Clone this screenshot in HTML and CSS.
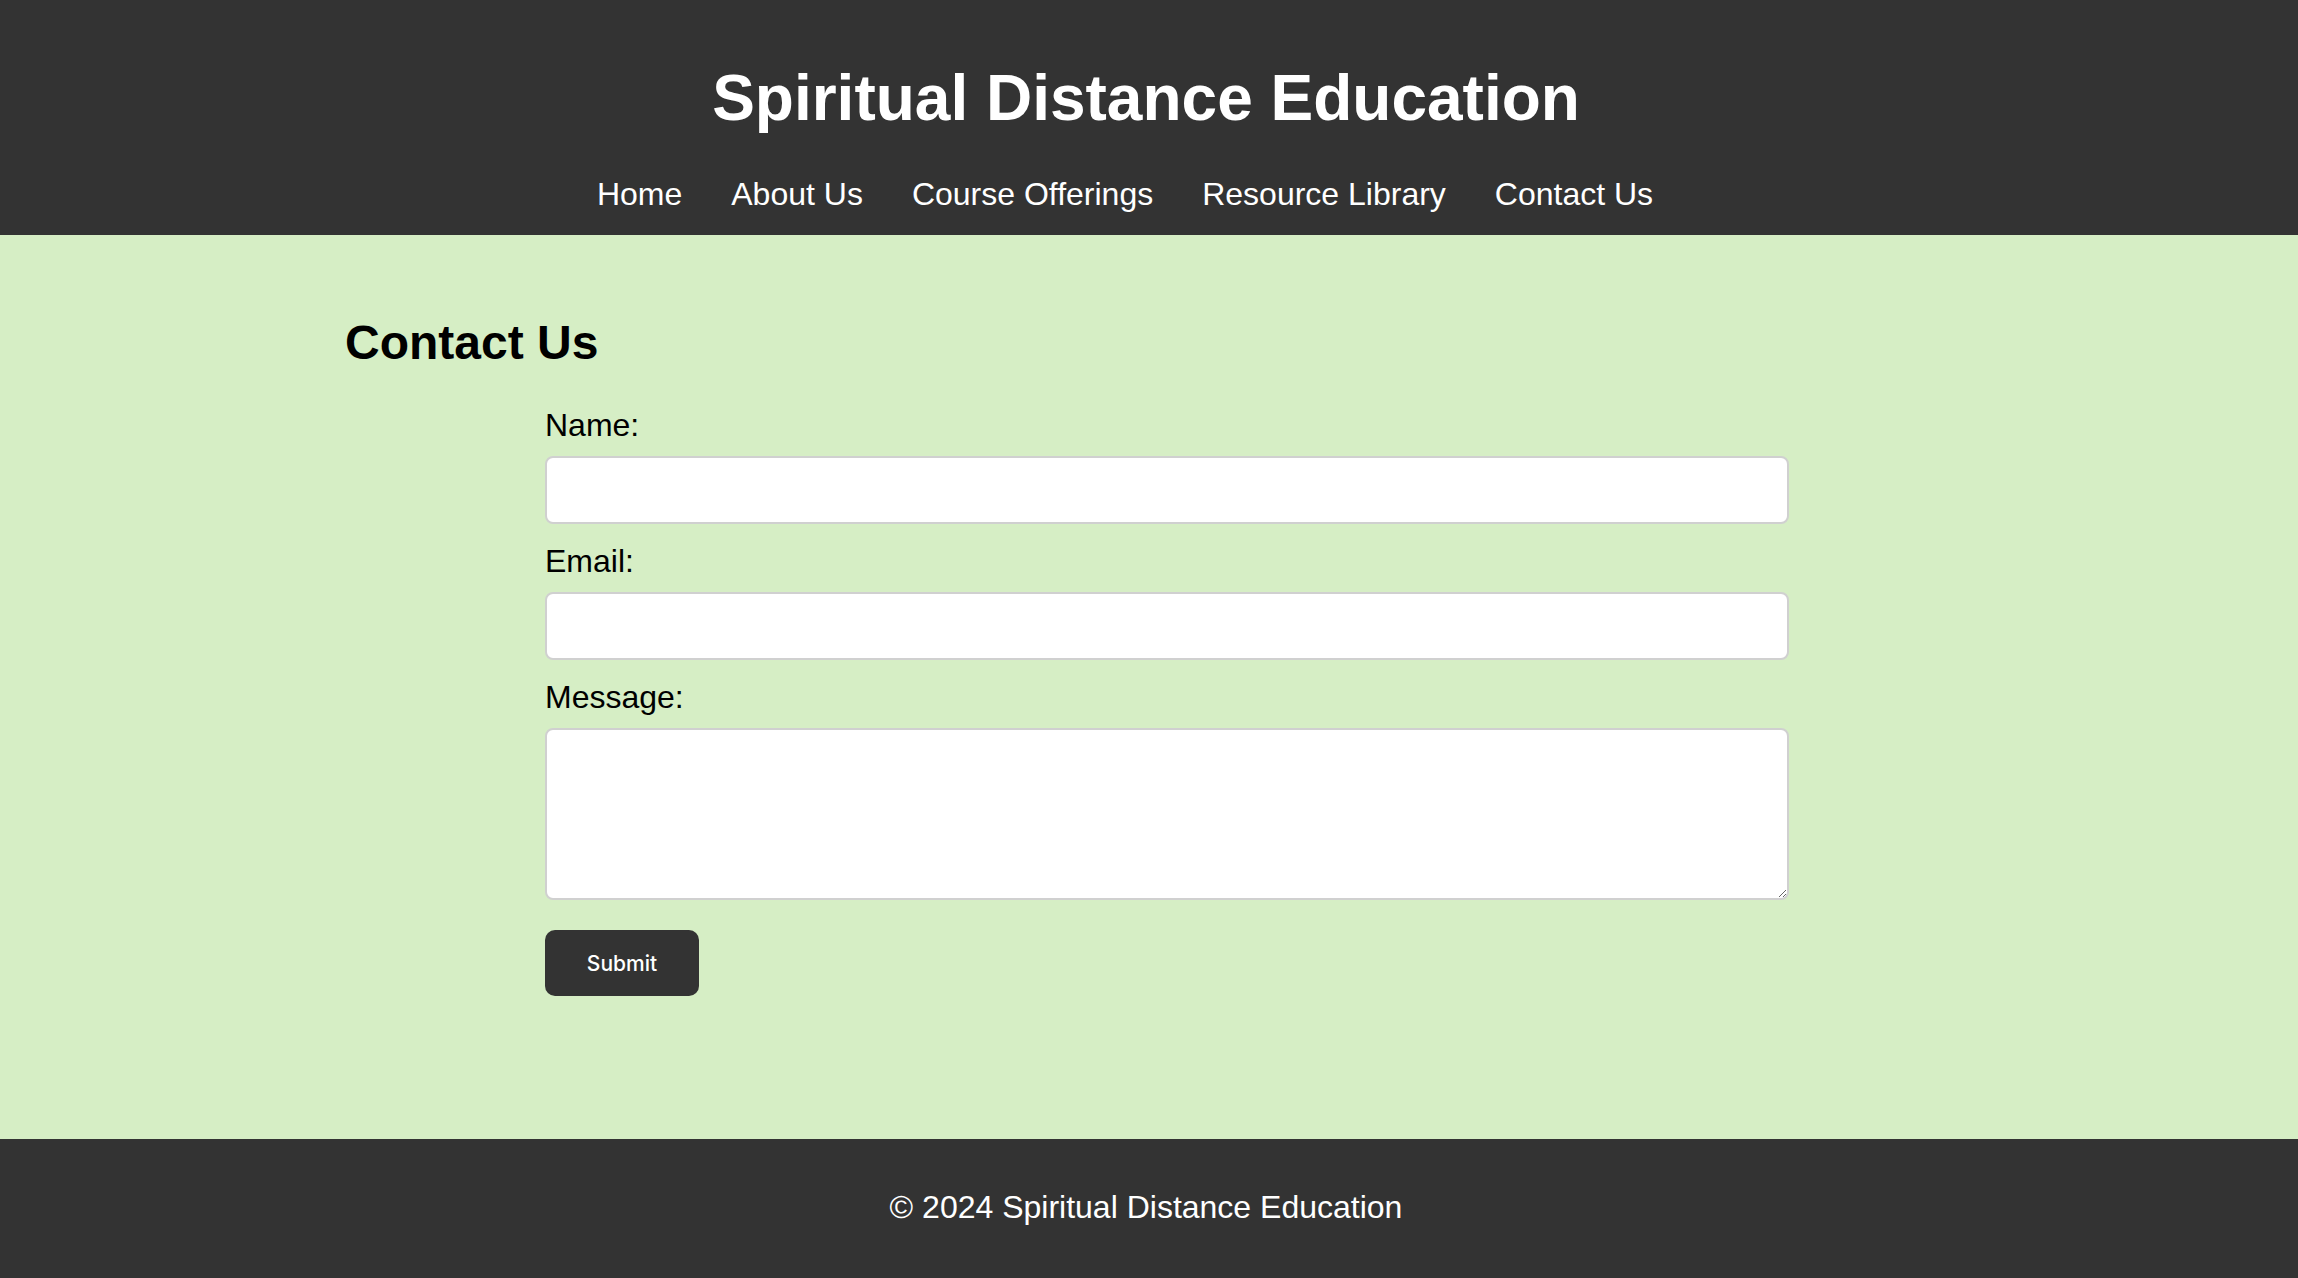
FILE: index.html
```html
<!DOCTYPE html>
<html lang="en">
<head>
<meta charset="utf-8">
<title>Contact Us - Spiritual Distance Education</title>
<link rel="stylesheet" href="styles.css">
</head>
<body>
<header class="site-header">
  <h1 class="site-title">Spiritual Distance Education</h1>
  <nav class="site-nav">
    <a href="#" class="nav-link">Home</a>
    <a href="#" class="nav-link">About Us</a>
    <a href="#" class="nav-link">Course Offerings</a>
    <a href="#" class="nav-link">Resource Library</a>
    <a href="#" class="nav-link">Contact Us</a>
  </nav>
</header>
<main class="main">
  <div class="container">
    <h2 class="page-title">Contact Us</h2>
    <form class="contact-form">
      <label class="field-label" for="name">Name:</label>
      <input class="field-input" type="text" id="name" name="name">
      <label class="field-label" for="email">Email:</label>
      <input class="field-input" type="email" id="email" name="email">
      <label class="field-label" for="message">Message:</label>
      <textarea class="field-input field-textarea" id="message" name="message"></textarea>
      <button class="submit-btn" type="submit">Submit</button>
    </form>
  </div>
</main>
<footer class="site-footer">
  <p class="footer-text">© 2024 Spiritual Distance Education</p>
</footer>
</body>
</html>
```

FILE: styles.css
```css
html, body {
  margin: 0;
  padding: 0;
}

body {
  font-family: "Liberation Sans", Arial, sans-serif;
  background: #d6eec5;
  color: #000;
}

.site-header {
  background: #333333;
  color: #fff;
  padding: 61px 6px 22px 0;
  text-align: center;
}

.site-title {
  margin: 0 0 41px;
  font-size: 64px;
  font-weight: bold;
  line-height: normal;
}

.site-nav {
  display: flex;
  justify-content: center;
  gap: 49px;
  padding-right: 42px;
  font-size: 32px;
  line-height: normal;
}

.nav-link {
  color: #fff;
  text-decoration: none;
}

.main {
  background: #d6eec5;
  padding: 80px 0 143px;
}

.container {
  max-width: 1608px;
  margin: 0 auto;
}

.page-title {
  margin: 0 0 37px;
  font-size: 48px;
  font-weight: bold;
  line-height: normal;
}

.contact-form {
  display: flex;
  flex-direction: column;
  align-items: flex-start;
  margin-left: 200px;
  width: 1244px;
}

.field-label {
  display: block;
  font-size: 32px;
  line-height: normal;
  margin-bottom: 12px;
}

.field-input {
  display: block;
  box-sizing: border-box;
  width: 1244px;
  height: 68px;
  margin: 0 0 19px;
  padding: 10px 14px;
  border: 2px solid #d0d0d0;
  border-radius: 8px;
  background: #fff;
  font-family: "Liberation Sans", Arial, sans-serif;
  font-size: 24px;
}

.field-textarea {
  height: 172px;
  margin-bottom: 30px;
  resize: vertical;
}

.submit-btn {
  width: 154px;
  height: 66px;
  border: none;
  border-radius: 10px;
  background: #333333;
  color: #fff;
  font-family: Inter, "Noto Sans", sans-serif;
  font-size: 21px;
  font-weight: 500;
  cursor: pointer;
}

.site-footer {
  background: #333333;
  color: #fff;
  text-align: center;
  padding: 50px 6px 54px 0;
}

.footer-text {
  margin: 0;
  font-size: 32px;
  line-height: normal;
}
```
